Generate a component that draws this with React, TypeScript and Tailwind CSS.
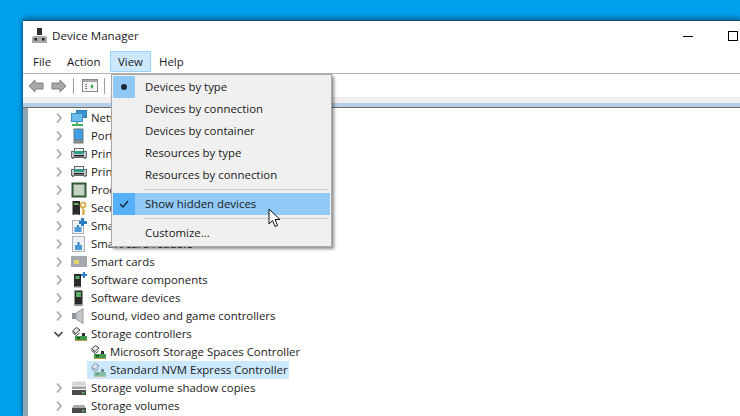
const font = "[font-family:'Open_Sans','Liberation_Sans',sans-serif]";

function Chevron({ open }: { open?: boolean }) {
  return (
    <svg width="10" height="10" viewBox="0 0 10 10" className="shrink-0">
      {open ? (
        <path d="M0.5 3l4 4 4-4" fill="none" stroke="#404040" strokeWidth="1.6" />
      ) : (
        <path d="M3 0.5l4 4.5-4 4.5" fill="none" stroke="#a6a6a6" strokeWidth="1.6" />
      )}
    </svg>
  );
}

function StorageGlyph({ dim }: { dim?: boolean }) {
  return (
    <svg width="16" height="16" viewBox="0 0 16 16" className="shrink-0" opacity={dim ? 0.5 : 1}>
      <path d="M1.5 5l4-3.5 3.5 2.5-4 3.5z" fill="#e6e6e6" stroke="#3f3f3f" />
      <path d="M1.5 6.5l4 3 3-2.5" fill="none" stroke="#3f3f3f" />
      <rect x="4" y="10" width="12" height="4" fill="#3f9a4e" />
      <rect x="11" y="7" width="3" height="3" fill="#2d2d2d" />
      <rect x="6" y="11" width="3" height="2" fill="#1f5a2b" />
      <rect x="4" y="14" width="12" height="1" fill="#b99a3a" />
    </svg>
  );
}

function DeviceIcon({ type }: { type: string }) {
  const box = { width: 16, height: 16, viewBox: '0 0 16 16', className: 'shrink-0' };
  switch (type) {
    case 'network':
      return (
        <svg {...box}>
          <rect x="5.5" y="0.5" width="10" height="7" fill="#3d93d0" stroke="#2e7fb4" />
          <rect x="0.5" y="3.5" width="11" height="8" fill="#6cbcec" stroke="#3a8fc4" />
          <path d="M6 12v2M1 15h11" stroke="#45b35c" strokeWidth="1.8" />
        </svg>
      );
    case 'port':
      return (
        <svg {...box}>
          <rect x="2.5" y="0.5" width="10" height="15" rx="1" fill="#6f7478" />
          <rect x="3.5" y="1.5" width="8" height="10" fill="#3ea0e4" />
          <rect x="3.5" y="12.5" width="8" height="2" fill="#8b9095" />
        </svg>
      );
    case 'printer':
      return (
        <svg {...box}>
          <rect x="3.5" y="2.5" width="9" height="3" fill="#f4f4f4" stroke="#666" />
          <rect x="0.5" y="5.5" width="15" height="6" fill="#c7c7c7" stroke="#666" />
          <rect x="3" y="5" width="10" height="3" fill="#2f9c8e" />
          <rect x="3" y="9" width="10" height="1.5" fill="#222" />
          <rect x="1" y="11" width="2" height="2" fill="#777" />
          <rect x="13" y="11" width="2" height="2" fill="#777" />
        </svg>
      );
    case 'cpu':
      return (
        <svg {...box}>
          <rect x="0.5" y="0.5" width="15" height="15" fill="#2f5a35" />
          <rect x="2.5" y="2.5" width="11" height="11" fill="#c3d2c3" />
        </svg>
      );
    case 'security':
      return (
        <svg {...box}>
          <rect x="1.5" y="1" width="7.5" height="14" fill="#2a2a2a" />
          <rect x="3" y="3" width="4.5" height="2" fill="#6db36a" />
          <rect x="2.5" y="14" width="5.5" height="1" fill="#888" />
          <circle cx="12" cy="5" r="2.5" fill="none" stroke="#d8a93a" strokeWidth="1.7" />
          <path d="M12 7.5V15M12 11h2M12 13.5h2" stroke="#d8a93a" strokeWidth="1.5" />
        </svg>
      );
    case 'filter':
      return (
        <svg {...box}>
          <rect x="1.5" y="2.5" width="11" height="13" fill="#eef1f4" stroke="#aab2b8" />
          <rect x="3.5" y="9" width="7" height="5" fill="#4d9bd6" />
          <rect x="6" y="7" width="2" height="2" fill="#2b7cc4" />
          <path d="M10 0h3v3h3v3h-3v2h-3V6H8V3h2z" fill="#2b7cc4" />
        </svg>
      );
    case 'reader':
      return (
        <svg {...box}>
          <rect x="1.5" y="0.5" width="12" height="15" fill="#eef1f4" stroke="#aab2b8" />
          <rect x="4" y="9" width="7" height="5" fill="#4d9bd6" />
          <rect x="6.5" y="6" width="2" height="3" fill="#2b7cc4" />
        </svg>
      );
    case 'card':
      return (
        <svg {...box}>
          <rect x="0" y="2" width="16" height="11" fill="#a3a9ae" />
          <rect x="3" y="6" width="5" height="4" fill="#e6d36a" />
        </svg>
      );
    case 'software':
      return (
        <svg {...box}>
          <rect x="3" y="2" width="7" height="13" fill="#2a2a2a" />
          <rect x="4.5" y="4" width="4" height="3" fill="#58b368" />
          <rect x="3.5" y="14" width="6" height="1.5" fill="#777" />
          <path d="M12 0h2v2h2v2h-2v2h-2V4h-2V2h2z" fill="#2b7cc4" />
        </svg>
      );
    case 'softdev':
      return (
        <svg {...box}>
          <rect x="3.5" y="0.5" width="8" height="15" fill="#2a2a2a" />
          <rect x="5" y="2" width="5" height="5" fill="#58b368" />
          <rect x="4" y="14" width="7" height="1.5" fill="#888" />
        </svg>
      );
    case 'sound':
      return (
        <svg {...box}>
          <rect x="1" y="5" width="4" height="6" fill="#8f9497" />
          <path d="M5 5l7-4.5v15L5 11z" fill="#c3c7ca" stroke="#9a9ea1" />
        </svg>
      );
    case 'storage':
      return <StorageGlyph />;
    case 'storage-dim':
      return <StorageGlyph dim />;
    case 'shadow':
      return (
        <svg {...box}>
          <path d="M2 1.5h12l1 2v2H1v-2z" fill="#d4d4d4" />
          <rect x="1" y="6.5" width="14" height="2.5" fill="#a0a0a0" />
          <rect x="1" y="10" width="14" height="5" fill="#4a4a4a" />
          <rect x="11" y="12" width="2.5" height="1.5" fill="#59c26a" />
        </svg>
      );
    default:
      return (
        <svg {...box}>
          <path d="M3 7h10l2 3H1z" fill="#a8a8a8" />
          <rect x="1" y="10" width="14" height="5" fill="#4a4a4a" />
          <rect x="11" y="12" width="2.5" height="1.5" fill="#59c26a" />
        </svg>
      );
  }
}

const rows = [
  { label: 'Network adapters', icon: 'network' },
  { label: 'Portable Devices', icon: 'port' },
  { label: 'Print queues', icon: 'printer' },
  { label: 'Printers', icon: 'printer' },
  { label: 'Processors', icon: 'cpu' },
  { label: 'Security devices', icon: 'security' },
  { label: 'Smart card filters', icon: 'filter' },
  { label: 'Smart card readers', icon: 'reader' },
  { label: 'Smart cards', icon: 'card' },
  { label: 'Software components', icon: 'software' },
  { label: 'Software devices', icon: 'softdev' },
  { label: 'Sound, video and game controllers', icon: 'sound' },
  { label: 'Storage controllers', icon: 'storage', open: true },
  { label: 'Microsoft Storage Spaces Controller', icon: 'storage', child: true },
  { label: 'Standard NVM Express Controller', icon: 'storage-dim', child: true, selected: true },
  { label: 'Storage volume shadow copies', icon: 'shadow' },
  { label: 'Storage volumes', icon: 'volume' },
];

function TreeRow({ row }: { row: (typeof rows)[number] }) {
  if (row.child) {
    return (
      <div className="flex h-[18px] items-center pl-[59px]">
        <div className={`flex h-[18px] items-center gap-[4px] pl-[3px] ${row.selected ? 'w-[202px] bg-[#cce8ff]' : ''}`}>
          <DeviceIcon type={row.icon} />
          <span className="whitespace-nowrap">{row.label}</span>
        </div>
      </div>
    );
  }
  return (
    <div className="flex h-[18px] items-center pl-[26px]">
      <Chevron open={row.open} />
      <div className="ml-[7px] flex items-center gap-[4px]">
        <DeviceIcon type={row.icon} />
        <span className="whitespace-nowrap">{row.label}</span>
      </div>
    </div>
  );
}

function MenuItem({ label, radio, check }: { label: string; radio?: boolean; check?: boolean }) {
  return (
    <div className={`flex h-[22px] items-center ${check ? 'bg-[#91c9f7]' : ''}`}>
      <div className={`flex h-[22px] w-[22px] items-center justify-center ${radio ? 'bg-[#90c8f6]' : ''} ${check ? 'bg-[#56b0fa]' : ''}`}>
        {radio && <div className="h-[6px] w-[6px] rounded-full bg-[#1f2a38]" />}
        {check && (
          <svg width="12" height="10" viewBox="0 0 12 10">
            <path d="M2 5l3 3 5-6" fill="none" stroke="#1f2a38" strokeWidth="1.5" />
          </svg>
        )}
      </div>
      <span className="ml-[10px] whitespace-nowrap">{label}</span>
    </div>
  );
}

function ArrowIcon({ flip }: { flip?: boolean }) {
  return (
    <svg width="16" height="14" viewBox="0 0 16 14" className={flip ? '-scale-x-100' : ''}>
      <path d="M1 7l6-6v3h8v6H7v3z" fill="#a8a8a8" stroke="#808080" />
    </svg>
  );
}

export default function App() {
  return (
    <div className={`${font} relative flex h-[416px] w-[740px] overflow-hidden bg-[#00a2ed] pl-[23px] pt-[20px] text-[11.4px] text-[#1a1a1a]`}>
      <div className="flex h-[396px] flex-1 flex-col border-t border-[#10506e] bg-white shadow-[0_-2px_6px_rgba(0,50,90,0.55),-1px_0_3px_rgba(0,50,90,0.35)]">
        <div className="flex h-[30px] shrink-0 items-center pl-[9px] pr-[2px]">
          <svg width="15" height="16" viewBox="0 0 15 16" className="shrink-0">
            <rect x="5" y="0" width="5" height="7" fill="#2f2f2f" />
            <path d="M1 8h13l1 2v5H0v-5z" fill="#a8a8a8" />
            <rect x="2.5" y="10" width="2.5" height="2.5" fill="#222" />
            <rect x="10" y="10" width="2.5" height="2.5" fill="#222" />
          </svg>
          <span className="ml-[5px] text-[11.6px]">Device Manager</span>
          <div className="ml-auto flex items-center">
            <div className="h-[1px] w-[10px] bg-black" />
            <div className="ml-[35px] h-[10px] w-[10px] border border-black" />
          </div>
        </div>
        <div className="flex h-[23px] shrink-0 items-center border-b border-[#b4b4b4] pb-[1px] pl-[10px]">
          <span className="w-[18px]">File</span>
          <span className="ml-[16px] w-[35px]">Action</span>
          <span className="ml-[8px] flex h-[21px] w-[41px] items-center justify-center border border-[#99d1ff] bg-[#cce8ff]">View</span>
          <span className="ml-[8px]">Help</span>
        </div>
        <div className="flex h-[23px] shrink-0 items-center pl-[5px]">
          <ArrowIcon />
          <div className="ml-[7px]"><ArrowIcon flip /></div>
          <div className="ml-[6px] h-[16px] w-[1px] bg-[#a0a0a0]" />
          <svg width="16" height="13" viewBox="0 0 16 13" className="ml-[8px]">
            <rect x="0.5" y="0.5" width="15" height="12" fill="#f6f6f6" stroke="#8a8a8a" />
            <rect x="1" y="1" width="14" height="2" fill="#a8a8a8" />
            <path d="M3 5h2v1H3zM3 7h2v1H3zM3 9h2v1H3z" fill="#5a8a5a" />
            <path d="M11 5v5L8 7.5z" fill="#3aa655" />
          </svg>
          <div className="ml-[6px] h-[16px] w-[1px] bg-[#a0a0a0]" />
        </div>
        <div className="h-[6px] shrink-0 bg-[#f0eeee]" />
        <div className="h-[4px] shrink-0 bg-[#b4cde8]" />
        <div className="h-[1px] shrink-0 bg-[#6f6f60]" />
        <div className="flex flex-1 overflow-hidden bg-[#8fa5b5] pl-[5px]">
          <div className="flex-1 bg-white pt-[1px]">
            {rows.map((row) => (
              <TreeRow key={row.label} row={row} />
            ))}
          </div>
        </div>
      </div>

      <div className="absolute left-[111px] top-[74px] h-[173px] w-[221px] border border-[#a8a8a8] bg-[#f0f0f0] p-[1px] shadow-[2px_2px_3px_rgba(0,0,0,0.45)]">
        <MenuItem label="Devices by type" radio />
        <MenuItem label="Devices by connection" />
        <MenuItem label="Devices by container" />
        <MenuItem label="Resources by type" />
        <MenuItem label="Resources by connection" />
        <div className="mb-[3px] ml-[30px] mr-[2px] mt-[3px] h-[1px] bg-[#d0d0d0]" />
        <MenuItem label="Show hidden devices" check />
        <div className="mb-[3px] ml-[30px] mr-[2px] mt-[3px] h-[1px] bg-[#d0d0d0]" />
        <MenuItem label="Customize..." />
      </div>

      <svg width="14" height="20" viewBox="0 0 14 20" className="absolute left-[268px] top-[208px]">
        <path d="M1 1v15l3.5-3.5 2.5 6 2.5-1-2.5-6H12z" fill="#fff" stroke="#111" strokeWidth="1" />
      </svg>
    </div>
  );
}
